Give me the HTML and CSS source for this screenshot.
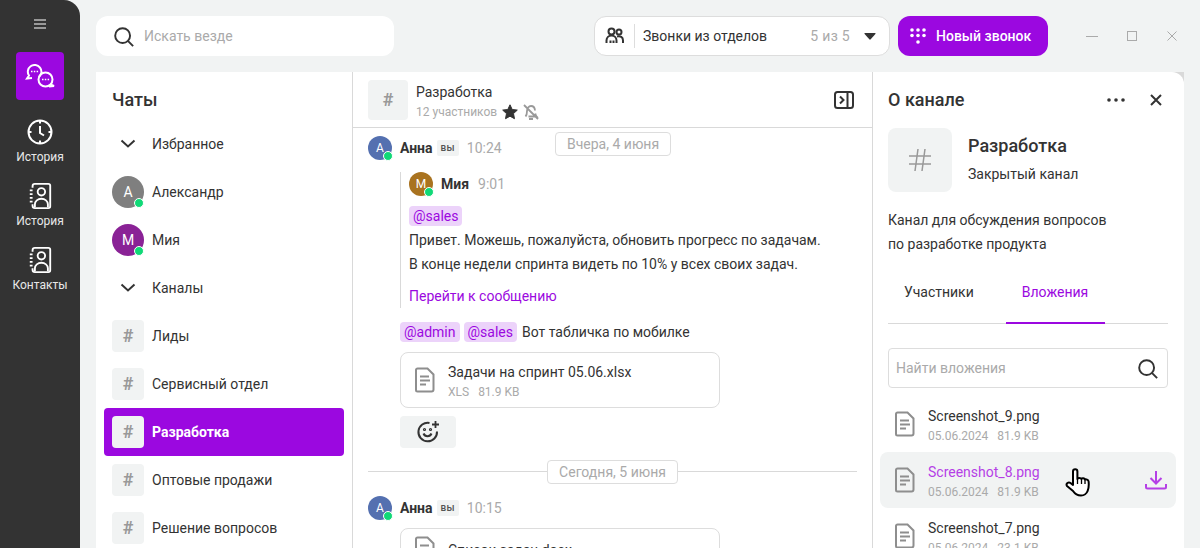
FILE: index.html
```html
<!DOCTYPE html>
<html lang="ru">
<head>
<meta charset="utf-8">
<title>Чаты</title>
<link rel="stylesheet" href="styles.css">
</head>
<body>
<svg class="defs" width="0" height="0">
  <symbol id="contact" viewBox="0 0 24 28"><path d="M4 5V3.500A2.500 2.500 0 0 1 6.500 1H21a2 2 0 0 1 2 2v22a2 2 0 0 1-2 2H6.500A2.500 2.500 0 0 1 4 24.500V23" fill="none" stroke="currentColor" stroke-width="2"/><path d="M1 8h3M1 12h3M1 16h3M1 20h3" stroke="currentColor" stroke-width="2"/><circle cx="13.500" cy="9.500" r="4" fill="none" stroke="currentColor" stroke-width="2"/><path d="M6.500 26v-3a7 6 0 0 1 14 0v3" fill="none" stroke="currentColor" stroke-width="2"/></symbol>
  <symbol id="file" viewBox="0 0 20 26"><path d="M2.500 1.500h10l6 6v15a2 2 0 0 1-2 2h-14a1.500 1.500 0 0 1-1.500-1.500V3a1.500 1.500 0 0 1 1.500-1.500z" fill="none" stroke="currentColor" stroke-width="2"/><path d="M5 9.500h9M5 13.500h10M5 17.500h6" stroke="currentColor" stroke-width="2"/></symbol>
  <symbol id="search" viewBox="0 0 24 24"><circle cx="11" cy="11" r="8.500" fill="none" stroke="currentColor" stroke-width="2.200"/><path d="M17 17l6 6" stroke="currentColor" stroke-width="2.200"/></symbol>
  <symbol id="chev" viewBox="0 0 16 10"><path d="M1.500 1.500L8 7.500l6.500-6" fill="none" stroke="currentColor" stroke-width="2"/></symbol>
</svg>

<nav class="rail">
  <svg class="burger" width="14" height="12" viewBox="0 0 14 12"><path d="M1 2h12M1 6h12M1 10h12" stroke="#fff" stroke-width="1.200"/></svg>
  <div class="rail-tile">
    <svg width="32" height="24" viewBox="0 0 32 24" fill="none" stroke="#fff" stroke-width="2"><path d="M15 13A6.800 6.800 0 1 0 5 11.600L3 14.500l5-.4"/><circle cx="21.500" cy="15.500" r="7"/><path d="M26.500 20.500l3.500 1.500-5 .5"/><path d="M7 7.500h1.500M9.800 7.500h1.500M12.600 7.500h1.500M18 15.500h1.500M20.800 15.500h1.500M23.600 15.500h1.500" stroke-width="1.600"/></svg>
  </div>
  <a class="rail-item">
    <svg width="26" height="26" viewBox="0 0 26 26" fill="none" stroke="#fff" stroke-width="2"><circle cx="13" cy="13" r="11.500"/><path d="M13 1.500v3M13 21.500v3M1.500 13h3M21.500 13h3M13 7v7l4 2.500"/></svg>
    <span>История</span>
  </a>
  <a class="rail-item">
    <svg class="white" width="24" height="26"><use href="#contact"/></svg>
    <span>История</span>
  </a>
  <a class="rail-item">
    <svg class="white" width="24" height="26"><use href="#contact"/></svg>
    <span>Контакты</span>
  </a>
</nav>

<div class="main">
  <header class="topbar">
    <div class="search-global">
      <svg class="dark" width="21" height="21"><use href="#search"/></svg>
      <span>Искать везде</span>
    </div>
    <div class="filter">
      <svg class="dark" width="19" height="18" viewBox="0 0 18 18" fill="none" stroke="currentColor" stroke-width="2"><circle cx="6" cy="4.500" r="3"/><circle cx="13.500" cy="5" r="2.500"/><path d="M1 16v-2.500a5 5 0 0 1 10 0V16M11.500 9.500c3.500-1 6 .8 6 4V16M5 16v-2.500M8 16v-2.500"/></svg>
      <span class="filter-name">Звонки из отделов</span>
      <span class="filter-count">5 из 5</span>
      <svg class="dark" width="12" height="7" viewBox="0 0 12 7"><path d="M1 0h10q1 0 .4 1L6.700 6.300q-.7.700-1.400 0L.6 1Q0 0 1 0z" fill="currentColor"/></svg>
    </div>
    <button class="new-call">
      <svg width="16" height="18" viewBox="0 0 16 18" fill="#fff"><circle cx="2" cy="3" r="1.800"/><circle cx="8" cy="3" r="1.800"/><circle cx="14" cy="3" r="1.800"/><circle cx="2" cy="8.500" r="1.800"/><circle cx="8" cy="8.500" r="1.800"/><circle cx="14" cy="8.500" r="1.800"/><circle cx="8" cy="15" r="1.800"/></svg>
      Новый звонок
    </button>
    <div class="winctl">
      <svg width="12" height="12" viewBox="0 0 12 12"><path d="M0 6.500h12" stroke="#aaa"/></svg>
      <svg width="12" height="12" viewBox="0 0 12 12"><rect x="1.500" y="1.500" width="9" height="9" fill="none" stroke="#aaa"/></svg>
      <svg width="12" height="12" viewBox="0 0 12 12"><path d="M1.500 1.500l9 9M10.500 1.500l-9 9" stroke="#aaa"/></svg>
    </div>
  </header>

  <div class="panels">
    <aside class="chats">
      <h2 class="panel-title">Чаты</h2>
      <div class="row"><span class="row-ico"><svg class="dark" width="16" height="10"><use href="#chev"/></svg></span>Избранное</div>
      <div class="row"><span class="ava ava-32 grey">А<i class="dot"></i></span>Александр</div>
      <div class="row"><span class="ava ava-32 plum">М<i class="dot"></i></span>Мия</div>
      <div class="row"><span class="row-ico"><svg class="dark" width="16" height="10"><use href="#chev"/></svg></span>Каналы</div>
      <div class="row"><span class="hash">#</span>Лиды</div>
      <div class="row"><span class="hash">#</span>Сервисный отдел</div>
      <div class="row active"><span class="hash">#</span>Разработка</div>
      <div class="row"><span class="hash">#</span>Оптовые продажи</div>
      <div class="row"><span class="hash">#</span>Решение вопросов</div>
    </aside>

    <section class="chat">
      <div class="chat-head">
        <span class="hash hash-40">#</span>
        <div class="chat-title">
          <div class="chat-name">Разработка</div>
          <div class="chat-sub">12 участников
            <svg width="16" height="16" viewBox="0 0 16 16"><path d="M8 .8l2.200 4.700 5.100.6-3.800 3.500 1 5.100L8 12.200l-4.500 2.500 1-5.100L.7 6.100l5.100-.6z" fill="#333" stroke="#333" stroke-linejoin="round"/></svg>
            <svg width="16" height="16" viewBox="0 0 16 16" fill="none" stroke="#999" stroke-width="1.800"><path d="M2.500 12.500c1-1 1.500-2.500 1.500-5.500 0-2.500 1.800-5 4-5s3.800 1.800 4 4.500M12.300 9.500c.2 1.300.5 2.300 1.200 3H5.500M6 15h4M1 1l14 14"/></svg>
          </div>
        </div>
        <svg class="dark toggle" width="20" height="18" viewBox="0 0 20 18" fill="none" stroke="currentColor" stroke-width="2"><rect x="1" y="1" width="18" height="16" rx="2.500"/><path d="M13.500 1v16M6 5.500L9.500 9 6 12.500"/></svg>
      </div>
      <div class="messages">
        <span class="pill pill-float">Вчера, 4 июня</span>
        <div class="msg-head">
          <span class="ava ava-24 blue">А<i class="dot"></i></span>
          <b>Анна</b><span class="you">вы</span><time>10:24</time>
        </div>
        <div class="msg-body">
          <blockquote class="quote">
            <div class="msg-head">
              <span class="ava ava-24 brown">М<i class="dot"></i></span>
              <b>Мия</b><time class="time-sm">9:01</time>
            </div>
            <div class="tags"><span class="tag">@sales</span></div>
            <p>Привет. Можешь, пожалуйста, обновить прогресс по задачам.</p>
            <p>В конце недели спринта видеть по 10% у всех своих задач.</p>
            <a class="jump">Перейти к сообщению</a>
          </blockquote>
          <div class="line-tags"><span class="tag">@admin</span><span class="tag">@sales</span><span class="line-text">Вот табличка по мобилке</span></div>
          <div class="file-card">
            <svg class="grey-ico" width="20" height="26"><use href="#file"/></svg>
            <div class="ftext"><div class="fname">Задачи на спринт 05.06.xlsx</div><div class="fmeta"><span>XLS</span><span>81.9 KB</span></div></div>
          </div>
          <div class="react">
            <svg class="dark" width="24" height="24" viewBox="0 0 24 24" fill="none" stroke="currentColor" stroke-width="2"><path d="M21 11.500a9.300 9.300 0 1 1-7.500-8.600"/><path d="M7.500 13.500c1.500 3.500 6.500 3.500 8 0"/><circle cx="8.500" cy="9.500" r=".6"/><circle cx="14.500" cy="9.500" r=".6"/><path d="M19.500 1v7M16 4.500h7" stroke-width="1.800"/></svg>
          </div>
        </div>
        <div class="divider"><span class="pill">Сегодня, 5 июня</span></div>
        <div class="msg-head msg-second">
          <span class="ava ava-24 blue">А<i class="dot"></i></span>
          <b>Анна</b><span class="you">вы</span><time>10:15</time>
        </div>
        <div class="msg-body">
          <div class="file-card file-second">
            <svg class="grey-ico" width="20" height="26"><use href="#file"/></svg>
            <div class="ftext"><div class="fname">Список задач.docx</div></div>
          </div>
        </div>
      </div>
    </section>

    <aside class="info">
      <div class="info-head">
        <h2 class="panel-title">О канале</h2>
        <svg class="dark" width="20" height="6" viewBox="0 0 20 6" fill="currentColor"><circle cx="3" cy="3" r="1.800"/><circle cx="10" cy="3" r="1.800"/><circle cx="17" cy="3" r="1.800"/></svg>
        <svg class="dark info-close" width="12" height="12" viewBox="0 0 12 12"><path d="M1 1l10 10M11 1L1 11" stroke="currentColor" stroke-width="2"/></svg>
      </div>
      <div class="info-card">
        <span class="hash-64"><svg width="22" height="22" viewBox="0 0 22 22" fill="none" stroke="#999" stroke-width="1.500"><path d="M9 0L6 22M16 0l-3 22M0 7h22M0 15h22"/></svg></span>
        <div class="info-text">
          <div class="info-name">Разработка</div>
          <div class="info-type">Закрытый канал</div>
        </div>
      </div>
      <p class="info-desc">Канал для обсуждения вопросов<br>по разработке продукта</p>
      <div class="tabs">
        <span class="tab">Участники</span>
        <span class="tab tab-on">Вложения</span>
      </div>
      <div class="find">
        <span>Найти вложения</span>
        <svg class="dark" width="21" height="21"><use href="#search"/></svg>
      </div>
      <div class="att">
        <svg class="grey-ico" width="20" height="26"><use href="#file"/></svg>
        <div class="ftext"><div class="fname">Screenshot_9.png</div><div class="fmeta"><span>05.06.2024</span><span>81.9 KB</span></div></div>
      </div>
      <div class="att att-hover">
        <svg class="grey-ico" width="20" height="26"><use href="#file"/></svg>
        <div class="ftext"><div class="fname">Screenshot_8.png</div><div class="fmeta"><span>05.06.2024</span><span>81.9 KB</span></div></div>
        <svg class="dl" width="22" height="20" viewBox="0 0 22 20" fill="none" stroke="#b53fe6" stroke-width="2"><path d="M11 1v12M5.500 8L11 13.500 16.500 8M1 14v3a1.500 1.500 0 0 0 1.500 1.500h17A1.500 1.500 0 0 0 21 17v-3"/></svg>
      </div>
      <div class="att">
        <svg class="grey-ico" width="20" height="26"><use href="#file"/></svg>
        <div class="ftext"><div class="fname">Screenshot_7.png</div><div class="fmeta"><span>05.06.2024</span><span>23.1 KB</span></div></div>
      </div>
      <svg class="cursor" width="26" height="30" viewBox="0 0 26 30"><path d="M8 17V3.500a2.200 2.200 0 0 1 4.400 0V11c.5-1.500 3.500-1.500 4 0 .6-1 3-1 3.500.5 1-.5 3.500 0 3.700 2 .4 4 .1 7-1 9.500-1 2.500-2.800 4.500-6.600 4.500-4 0-6-1.500-8-4.500L2 18c-1.500-2.500 1.500-4.500 3.500-3z" fill="#fff" stroke="#000" stroke-width="2" stroke-linejoin="round"/><path d="M12.500 11v5M16.500 11v5M20 11.500V16" stroke="#000" stroke-width="1.300"/></svg>
    </aside>
  </div>
</div>
</body>
</html>
```
FILE: styles.css
```css
* { box-sizing: border-box; }
html, body { height: 100%; }
body {
  margin: 0;
  display: flex;
  height: 548px;
  overflow: hidden;
  background: #f1f3f3;
  color: #333;
  font: 14px/20px Roboto, "Noto Sans", sans-serif;
}
.defs { position: absolute; }
svg { display: block; flex: none; }
.dark { color: #333; }
.white { color: #fff; }
.grey-ico { color: #8e8e8e; }

/* rail */
.rail {
  width: 80px;
  flex: none;
  background: #333;
  border-top-right-radius: 16px;
  display: flex;
  flex-direction: column;
  align-items: center;
  padding-top: 18px;
  color: #e8e8e8;
}
.burger { margin-bottom: 22px; }
.rail-tile {
  width: 48px;
  height: 48px;
  border-radius: 4px;
  background: #9b08e0;
  display: flex;
  align-items: center;
  justify-content: center;
  margin-bottom: 19px;
}
.rail-item {
  height: 64px;
  display: flex;
  flex-direction: column;
  align-items: center;
  font-size: 12px;
  line-height: 16px;
  gap: 4px;
}

/* layout */
.main {
  flex: 1;
  min-width: 0;
  padding: 16px 16px 0;
  display: flex;
  flex-direction: column;
  gap: 16px;
}
.topbar { height: 40px; display: flex; align-items: center; flex: none; }
.search-global {
  width: 298px;
  height: 40px;
  background: #fff;
  border-radius: 12px;
  display: flex;
  align-items: center;
  gap: 10px;
  padding-left: 17px;
  color: #aaa;
  margin-right: 200px;
}
.filter {
  width: 296px;
  height: 40px;
  background: #fff;
  border: 1px solid #ddd;
  border-radius: 12px;
  display: flex;
  align-items: center;
  padding: 0 13px 0 10px;
}
.filter svg:first-child { margin-right: 10px; }
.filter-name { border-left: 1px solid #ddd; padding-left: 8px; line-height: 24px; flex: 1; }
.filter-count { color: #aaa; letter-spacing: .3px; margin-right: 14px; }
.new-call {
  margin-left: 8px;
  width: 150px;
  height: 40px;
  border: 0;
  border-radius: 12px;
  background: #9b08e0;
  color: #fff;
  font: 500 14px/20px Roboto, sans-serif;
  display: flex;
  align-items: center;
  gap: 10px;
  padding: 0 0 0 12px;
}
.winctl { margin-left: 38px; display: flex; gap: 28px; }

.panels { flex: 1; min-height: 0; display: flex; gap: 1px; background: #d9d9d9; }
.chats { width: 256px; flex: none; background: #fff; padding: 16px 8px 0; }
.panel-title { margin: 0; font: 500 18px/24px Roboto, sans-serif; color: #333; padding-left: 8px; }
.chats .panel-title { margin-bottom: 8px; }
.row { height: 48px; display: flex; align-items: center; gap: 8px; padding: 0 8px; border-radius: 4px; }
.row-ico { width: 32px; display: flex; justify-content: center; }
.row.active { background: #9b08e0; color: #fff; font-weight: 700; }
.hash {
  width: 32px; height: 32px; border-radius: 4px; background: #f1f3f3;
  display: flex; align-items: center; justify-content: center;
  font: 700 18px/1 Roboto, sans-serif; color: #999; flex: none;
}
.hash-40 { width: 40px; height: 40px; }

.ava {
  position: relative; border-radius: 50%; color: #fff; flex: none;
  display: flex; align-items: center; justify-content: center;
}
.ava-32 { width: 32px; height: 32px; font-size: 14px; }
.ava-24 { width: 24px; height: 24px; font-size: 12px; }
.grey { background: #7f7f7f; }
.plum { background: #8a2296; }
.blue { background: #5470b0; }
.brown { background: #a97320; }
.dot {
  position: absolute; right: -1px; bottom: -1px; width: 10px; height: 10px;
  border-radius: 50%; background: #10d977; border: 1px solid #fff;
}
.ava-32 .dot { right: 0; bottom: 0; }

/* chat */
.chat { width: 519px; flex: none; background: #fff; display: flex; flex-direction: column; min-height: 0; }
.chat-head {
  height: 56px; flex: none; padding: 0 18px 0 15px;
  display: flex; align-items: center; gap: 8px;
  border-bottom: 1px solid #d9d9d9;
}
.chat-title { flex: 1; padding-top: 4px; }
.chat-name { line-height: 20px; }
.chat-sub { display: flex; align-items: center; gap: 5px; font-size: 12px; line-height: 20px; color: #aaa; }
.messages { position: relative; flex: 1; overflow: hidden; padding: 8px 15px 0; }
.pill {
  display: inline-block; padding: 0 11px; height: 24px; line-height: 22px;
  border: 1px solid #ddd; border-radius: 4px; background: #fff; color: #aaa; font-size: 14px;
}
.pill-float { position: absolute; left: 202px; top: 4px; }
.msg-head { display: flex; align-items: center; height: 24px; }
.msg-head b { font-weight: 700; margin-left: 8px; }
.you {
  background: #f1f3f3; color: #555; font-size: 10px; font-weight: 500; letter-spacing: .3px;
  height: 16px; line-height: 16px; padding: 0 4px; border-radius: 2px; margin-left: 4px;
}
time { color: #aaa; margin-left: 8px; }
.time-sm { margin-left: 9px; }
.msg-body { padding-left: 32px; }
.quote { margin: 12px 0 0; padding: 0 0 2px 8px; border-left: 1px solid #d9d9d9; height: 136px; }
.quote p { margin: 0; height: 24px; line-height: 24px; }
.tags { margin: 10px 0 2px; height: 20px; display: flex; }
.tag { background: #ecd3fa; color: #9b08e0; height: 20px; line-height: 20px; padding: 0 4px; border-radius: 4px; }
.jump { display: block; color: #9b08e0; line-height: 24px; margin-top: 8px; }
.line-tags { display: flex; align-items: center; gap: 4px; margin-top: 14px; height: 20px; }
.line-text { margin-left: 1px; }
.file-card {
  width: 320px; height: 56px; margin-top: 10px;
  border: 1px solid #ddd; border-radius: 8px;
  display: flex; align-items: center; gap: 13px; padding: 0 14px;
}
.ftext { padding-top: 4px; }
.fname { line-height: 20px; }
.fmeta { display: flex; gap: 9px; font-size: 12px; line-height: 20px; color: #aaa; }
.react {
  width: 56px; height: 32px; margin-top: 8px; background: #f1f3f3; border-radius: 4px;
  display: flex; align-items: center; justify-content: center;
}
.divider { display: flex; align-items: center; justify-content: center; margin-top: 12px; height: 24px; position: relative; }
.divider::before { content: ""; position: absolute; left: 0; right: 0; top: 11px; height: 1px; background: #d9d9d9; }
.divider .pill { position: relative; }
.msg-second { margin-top: 12px; }
.file-second { margin-top: 8px; align-items: flex-start; padding-top: 7px; }

/* info */
.info { position: relative; flex: 1; min-width: 0; background: #fff; border-top-right-radius: 12px; padding: 16px 16px 0 15px; }
.info .panel-title { padding-left: 0; flex: 1; }
.info-head { display: flex; align-items: center; }
.info-close { margin-left: 24px; margin-right: 6px; }
.info-card { display: flex; gap: 16px; margin-top: 16px; }
.hash-64 {
  width: 64px; height: 64px; border-radius: 8px; background: #f1f3f3;
  display: flex; align-items: center; justify-content: center; flex: none;
}
.info-text { padding-top: 6px; }
.info-name { font: 500 18px/24px Roboto, sans-serif; margin-bottom: 6px; }
.info-type { line-height: 20px; }
.info-desc { margin: 16px 0 0; line-height: 24px; }
.tabs { display: flex; height: 56px; margin-top: 12px; border-bottom: 1px solid #d9d9d9; width: 280px; padding-left: 16px; }
.tab { line-height: 48px; height: 56px; }
.tab:first-child { margin-right: 32px; }
.tab-on { color: #9b08e0; border-bottom: 2px solid #9b08e0; padding: 0 16px; width: 99px; height: 56px; }
.find {
  width: 280px; height: 40px; margin-top: 24px; border: 1px solid #ddd; border-radius: 4px;
  display: flex; align-items: center; justify-content: space-between; padding: 0 9px 0 7px; color: #aaa;
}
.att {
  height: 56px; margin: 0 -8px; width: 296px; padding: 0 12px 0 15px; border-radius: 8px;
  display: flex; align-items: center; gap: 13px; position: relative;
}
.find + .att { margin-top: 8px; }
.att-hover { background: #f1f3f3; }
.att-hover .fname { color: #b53fe6; }
.dl { margin-left: auto; margin-right: -3px; }
.cursor { position: absolute; left: 192px; top: 396px; }
```
